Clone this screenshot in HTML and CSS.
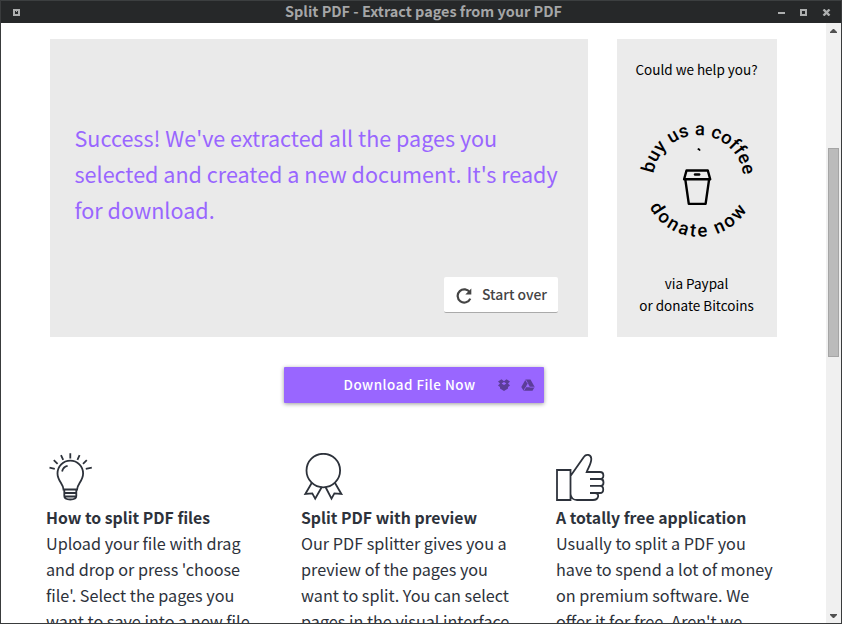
FILE: index.html
```html
<!DOCTYPE html>
<html lang="en">
<head>
<meta charset="utf-8">
<title>Split PDF - Extract pages from your PDF</title>
<link rel="stylesheet" href="styles.css">
</head>
<body>
<div class="window">
  <header class="titlebar">
    <svg class="menu-dot" width="7" height="7"><path fill="#adafaf" fill-rule="evenodd" d="M0 0h7v7H0zM2 2v3h3V2H4v1H3V2z"/></svg>
    <h1 class="window-title">Split PDF - Extract pages from your PDF</h1>
    <svg class="controls" width="53" height="7"><path fill="#adafaf" fill-rule="evenodd" d="M0 3h7v2H0zM22 0h7v7h-7zM24 2v3h3V2z"/><path stroke="#adafaf" stroke-width="2.4" d="M45.500.500l6 6M51.500.500l-6 6"/></svg>
  </header>
  <div class="viewport">
    <main class="page">
      <div class="panels">
        <section class="result">
          <p class="message"><span>Success! We've extracted all the pages you</span><br><span>selected and created a new document. It's ready</span><br><span>for download.</span></p>
          <button class="restart">
            <svg width="18" height="18" viewBox="0 0 18 18"><path d="M14.900 6.500A6.600 6.600 0 1 0 15.300 12.600" fill="none" stroke="#444" stroke-width="2.200"/><path d="M16.300 2.500v6h-6z" fill="#444"/></svg>
            <span class="restart-label">Start over</span>
          </button>
        </section>
        <aside class="help">
          <p class="ask">Could we help you?</p>
          <svg class="coffee" width="130" height="130" viewBox="632 115 130 130">
            <defs>
              <path id="arc-top" d="M653.500 173.500A45.300 45.300 0 0 1 743.500 178"/>
              <path id="arc-bottom" d="M649.500 207A56 56 0 0 0 753.500 194"/>
            </defs>
            <text class="ring"><textPath href="#arc-top" textLength="130">buy us a coffee</textPath></text>
            <text class="ring"><textPath href="#arc-bottom" textLength="118">donate now</textPath></text>
            <g fill="none" stroke="#000" stroke-width="2.400" stroke-linejoin="round" stroke-linecap="round"><path d="M686.500 170.500h21.300l2.400 8.800h-26.100zM685.400 180.200l3.400 23.700h16.800l3.400-23.700"/><path d="M695 174.500h4.200"/></g>
            <path d="M697.700 148.700l1.500.7.7 1.200" fill="none" stroke="#000" stroke-width="1.800"/>
          </svg>
          <p class="via">via Paypal<br>or donate Bitcoins</p>
        </aside>
      </div>
      <div class="download">
        <span class="download-label">Download File Now</span>
        <svg width="12" height="12" viewBox="0 0 12 12"><path fill="#5c3d99" d="M3.500.3L6 2.200 8.500.3 12 2.600 10 4.500l2 2-2 1.400v1.500L6 12 2 9.400V7.900L0 6.500l2-2-2-1.900z"/><path fill="#9966ff" d="M6 3l2.400 1.500L6 6 3.600 4.500z"/></svg>
        <svg class="drive" width="14" height="12" viewBox="0 0 14 12"><path fill="#5c3d99" d="M4.500.5h5L13.700 8l-2.200 3.800h-9L.3 8z"/><path fill="#9966ff" d="M6.800 4.300l2.300 3.900H4.600z"/><path d="M4.500.8l2.300 3.700M8.800 8.200h4.900M4.800 8.200L2.700 11.700" fill="none" stroke="#9966ff" stroke-width=".8"/></svg>
      </div>
      <div class="features">
        <article class="feature">
          <svg width="50" height="50" viewBox="0.7 0 50 50" class="icon"><path d="M18.200 36.500c0-5.300-6-8.700-6-16a12.800 12.800 0 0 1 25.600 0c0 7.300-6 10.700-6 16zM19 36.500v6.500c0 2.500 2.500 3.500 6 3.500s6-1 6-3.500v-6.500M19 40h12M19 43.500h12M16.800 18.500c.6-2.900 2.600-5 5.500-5.600M25 .2v5.200M15.700 2.200l2.200 4.600M34.300 2.200l-2.200 4.600M8.500 7.200l3.800 3.600M41.500 7.200l-3.800 3.600M4.200 14.600l5.300 1.200M46.500 14.600l-6 1.200"/></svg>
          <h2>How to split PDF files</h2>
          <p>Upload your file with drag<br>and drop or press 'choose<br>file'. Select the pages you<br>want to save into a new file</p>
        </article>
        <article class="feature">
          <svg width="50" height="50" viewBox="0 0 50 50" class="icon"><circle cx="22.300" cy="17.600" r="16.800"/><path d="M10.700 30L4.300 41l7-.6 2.900 5.300L20.800 34M34 30l6.400 11-7-.6-2.900 5.300L24.500 34"/></svg>
          <h2>Split PDF with preview</h2>
          <p>Our PDF splitter gives you a<br>preview of the pages you<br>want to split. You can select<br>pages in the visual interface</p>
        </article>
        <article class="feature">
          <svg width="50" height="50" viewBox="0 0 50 50" class="icon"><path d="M1 17h13.500v30H1zM14.500 23L28 3.800c2-3 7-2.500 7.300 2 .1 4.500-2.800 8.700-4.600 13.200H44c4.500 0 4.500 7 0 7H34h10.500c4 0 4 6.900 0 6.900H34h10c4.300 0 4.300 7.100 0 7.100H34h5c5 0 4 7-2 7H21c-3.500 0-6-2-6.500-6"/></svg>
          <h2>A totally free application</h2>
          <p>Usually to split a PDF you<br>have to spend a lot of money<br>on premium software. We<br>offer it for free. Aren't we</p>
        </article>
      </div>
    </main>
    <div class="scrollbar">
      <svg width="7" height="4"><path fill="#505050" d="M3 0h1l3 3v1H0V3z"/></svg>
      <div class="thumb"></div>
      <svg class="down" width="7" height="4"><path fill="#505050" d="M3 4h1l3-3V0H0v1z"/></svg>
    </div>
  </div>
</div>
</body>
</html>
```

FILE: styles.css
```css
* { box-sizing: border-box; margin: 0; padding: 0; }
body { font-family: "Noto Sans CJK SC", "Noto Sans", sans-serif; overflow: hidden; background: #fff; }
.window { width: 842px; height: 624px; border: 1px solid #393b3c; border-top: 0; display: flex; flex-direction: column; background: #fff; }
.titlebar { height: 23px; flex: none; border-top: 1px solid #3c3f40; background: #262829; display: flex; align-items: center; padding: 0 10px 0 12px; }
.menu-dot { flex: none; }
.window-title { flex: 1; text-align: center; font-size: 14.45px; line-height: 20px; padding-bottom: 2px; font-weight: 700; color: #a5a6a7; padding-left: 49px; }
.controls { flex: none; }
.viewport { flex: 1; min-height: 0; display: flex; overflow: hidden; }
.page { width: 825px; flex: none; padding: 16px 0 0 49px; overflow: hidden; }
.panels { display: flex; gap: 29px; height: 298px; }
.result { width: 538px; background: #eaeaea; padding: 81px 30px 24px 24.5px; display: flex; flex-direction: column; justify-content: space-between; }
.message { font-size: 21.57px; line-height: 36px; color: #9966ff; white-space: nowrap; }
.restart { align-self: flex-end; width: 114px; height: 36px; border: 0; border-radius: 2px; background: #fff; border-bottom: 1px solid #aaa; display: flex; align-items: center; gap: 9px; padding-left: 11px; font-family: inherit; font-size: 13.9px; font-weight: 500; color: #444; white-space: nowrap; }
.restart-label { line-height: 20px; padding-bottom: 2px; }
.help { width: 160px; background: #ebebeb; text-align: center; font-size: 13.5px; line-height: 22px; color: #000; display: flex; flex-direction: column; align-items: center; padding-right: 1px; }
.ask { margin-top: 19px; }
.coffee { margin: 35px 0 0 1px; flex: none; }
.ring { font-family: Roboto, sans-serif; font-size: 18.5px; font-weight: 500; fill: #000; }
.via { margin-top: 27px; }
.download { margin: 30px 0 0 234px; width: 260px; height: 36px; background: #9966ff; border-radius: 1px; box-shadow: 0 1px 4px rgba(0,0,0,.4); display: flex; align-items: center; padding-left: 59.5px; }
.download-label { width: 154.5px; font-size: 13.45px; line-height: 20px; padding-bottom: 2px; font-weight: 500; letter-spacing: .5px; color: #fff; white-space: nowrap; }
.drive { margin-left: 11px; }
.features { display: grid; grid-template-columns: 255px 255px 255px; margin: 50px 0 0 -4px; }
.icon { display: block; fill: none; stroke: #2d323b; stroke-width: 1.8; }
.feature { color: #2d323b; white-space: nowrap; }
.feature h2 { padding-top: 2px; font-size: 15.8px; line-height: 25px; font-weight: 700; }
.feature p { font-size: 16.2px; line-height: 26px; }
.scrollbar { width: 15px; background: #f0f0f0; display: flex; flex-direction: column; align-items: center; padding: 6px 0 5px; }
.thumb { width: 11px; height: 209px; margin-top: 115px; background: #bbb; border: 1px solid #a5a5a5; }
.down { margin-top: auto; }
```
